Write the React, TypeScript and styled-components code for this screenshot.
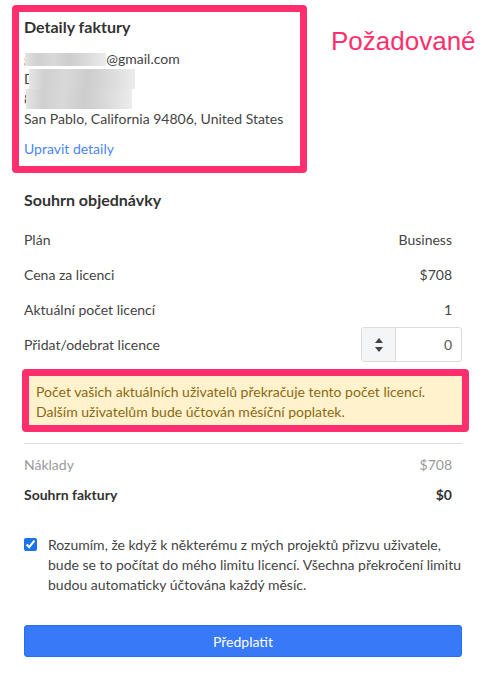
import React, { FunctionComponent } from "react";
import styled, { createGlobalStyle } from "styled-components";

const GlobalStyle = createGlobalStyle`
  body {
    margin: 0;
    background: #fff;
    font-family: Lato, "Open Sans", sans-serif;
    color: #444;
  }
`;

const StyledPage = styled.div`
  width: 491px;
  padding-top: 5px;
`;

const StyledTopRow = styled.div`
  display: flex;
  align-items: flex-start;
`;

const StyledHighlight = styled.div`
  border: 7px solid #ff2e6c;
  border-radius: 4px;
`;

const StyledDetails = styled(StyledHighlight)`
  box-sizing: border-box;
  width: 295px;
  margin-left: 12px;
  padding: 5px 5px 7px;
`;

const StyledAnnotation = styled.span`
  margin: 21px 0 0 24px;
  font-family: "Liberation Sans", Arial, sans-serif;
  font-size: 26px;
  color: #ff2e6c;
`;

const StyledTitle = styled.h2`
  margin: 0;
  font-size: 16px;
  line-height: 20px;
  font-weight: 700;
  color: #333;
`;

const StyledAddress = styled.div`
  margin-top: 12px;
  font-size: 14px;
  line-height: 20px;
`;

const StyledLine = styled.div`
  height: 20px;
  white-space: nowrap;
`;

const StyledRedacted = styled.span<{ width: number; tall?: boolean }>`
  display: inline-block;
  width: ${(props) => props.width}px;
  height: ${(props) => (props.tall ? 20 : 13)}px;
  margin-left: -6px;
  vertical-align: ${(props) => (props.tall ? "top" : "-2px")};
  background: linear-gradient(
    90deg,
    #e4e4e4 0%,
    #d0d0d0 15%,
    #d8d8d8 35%,
    #cdcdcd 55%,
    #d9d9d9 75%,
    #ececec 100%
  );
  filter: blur(0.6px);
`;

const StyledLink = styled.a`
  display: block;
  margin-top: 10px;
  font-size: 14px;
  line-height: 20px;
  color: #4a86f7;
  text-decoration: none;
`;

const StyledSection = styled.section`
  padding: 0 29px 0 24px;
`;

const StyledHeading = styled(StyledTitle)`
  margin: 17px 0 12px;
`;

const StyledRow = styled.div<{ height?: number }>`
  display: flex;
  align-items: center;
  justify-content: space-between;
  height: ${(props) => props.height ?? 35}px;
  font-size: 14px;
`;

const StyledValue = styled.span`
  padding-right: 10px;
`;

const StyledMuted = styled(StyledRow)`
  color: #9a9a9a;
`;

const StyledTotal = styled(StyledRow)`
  font-weight: 700;
  color: #333;
`;

const StyledNumberInput = styled.div`
  display: flex;
  width: 101px;
  height: 35px;
  box-sizing: border-box;
  border: 1px solid #dcdcdc;
  border-radius: 3px;
  overflow: hidden;
`;

const StyledStepper = styled.div`
  display: flex;
  flex-direction: column;
  align-items: center;
  justify-content: center;
  gap: 4px;
  width: 33px;
  background: #f4f5f7;
  border-right: 1px solid #dcdcdc;
`;

const StyledNumber = styled.span`
  flex: 1;
  align-self: center;
  text-align: right;
  padding-right: 9px;
  font-size: 14px;
  color: #555;
`;

const StyledWarning = styled(StyledHighlight)`
  margin: 7px -7px 0 -2px;
`;

const StyledWarningText = styled.p`
  margin: 0;
  padding: 6px 7px 3px;
  background: #fff2cc;
  font-size: 14px;
  line-height: 20px;
  color: #8a6914;
`;

const StyledDivider = styled.hr`
  margin: 11px 0 5px;
  border: 0;
  border-top: 1px solid #dcdcdc;
`;

const StyledConsent = styled.label`
  display: flex;
  align-items: flex-start;
  gap: 11px;
  margin-top: 26px;
  font-size: 14px;
  line-height: 20px;
`;

const StyledCheckbox = styled.input`
  flex: none;
  width: 13px;
  height: 13px;
  margin: 3px 0 0;
  accent-color: #1a73e8;
`;

const StyledButton = styled.button`
  display: block;
  width: 100%;
  height: 32px;
  margin-top: 30px;
  border: 1px solid #2a6ef0;
  border-radius: 3px;
  background: #3779f7;
  color: #fff;
  font-family: Lato, sans-serif;
  font-size: 14px;
`;

const Stepper: FunctionComponent = () => (
  <StyledStepper>
    <svg width="8" height="5" viewBox="0 0 8 5">
      <path d="M0 5 L4 0 L8 5 Z" fill="#444" />
    </svg>
    <svg width="8" height="5" viewBox="0 0 8 5">
      <path d="M0 0 L4 5 L8 0 Z" fill="#444" />
    </svg>
  </StyledStepper>
);

const App: FunctionComponent = () => {
  return (
    <StyledPage>
      <GlobalStyle />
      <StyledTopRow>
        <StyledDetails>
          <StyledTitle>Detaily faktury</StyledTitle>
          <StyledAddress>
            <StyledLine>
              g<StyledRedacted width={81} />
              @gmail.com
            </StyledLine>
            <StyledLine>
              D<StyledRedacted width={106} tall />
            </StyledLine>
            <StyledLine>
              8<StyledRedacted width={106} tall />
            </StyledLine>
            <StyledLine>San Pablo, California 94806, United States</StyledLine>
          </StyledAddress>
          <StyledLink href="#">Upravit detaily</StyledLink>
        </StyledDetails>
        <StyledAnnotation>Požadované</StyledAnnotation>
      </StyledTopRow>

      <StyledSection>
        <StyledHeading>Souhrn objednávky</StyledHeading>
        <StyledRow>
          <span>Plán</span>
          <StyledValue>Business</StyledValue>
        </StyledRow>
        <StyledRow>
          <span>Cena za licenci</span>
          <StyledValue>$708</StyledValue>
        </StyledRow>
        <StyledRow>
          <span>Aktuální počet licencí</span>
          <StyledValue>1</StyledValue>
        </StyledRow>
        <StyledRow>
          <span>Přidat/odebrat licence</span>
          <StyledNumberInput>
            <Stepper />
            <StyledNumber>0</StyledNumber>
          </StyledNumberInput>
        </StyledRow>

        <StyledWarning>
          <StyledWarningText>
            Počet vašich aktuálních uživatelů překračuje tento počet licencí.
            <br />
            Dalším uživatelům bude účtován měsíční poplatek.
          </StyledWarningText>
        </StyledWarning>

        <StyledDivider />
        <StyledMuted height={30}>
          <span>Náklady</span>
          <StyledValue>$708</StyledValue>
        </StyledMuted>
        <StyledTotal height={30}>
          <span>Souhrn faktury</span>
          <StyledValue>$0</StyledValue>
        </StyledTotal>

        <StyledConsent>
          <StyledCheckbox type="checkbox" defaultChecked />
          <span>
            Rozumím, že když k některému z mých projektů přizvu uživatele,
            bude se to počítat do mého limitu licencí. Všechna překročení
            limitu budou automaticky účtována každý měsíc.
          </span>
        </StyledConsent>

        <StyledButton>Předplatit</StyledButton>
      </StyledSection>
    </StyledPage>
  );
};

export default App;
